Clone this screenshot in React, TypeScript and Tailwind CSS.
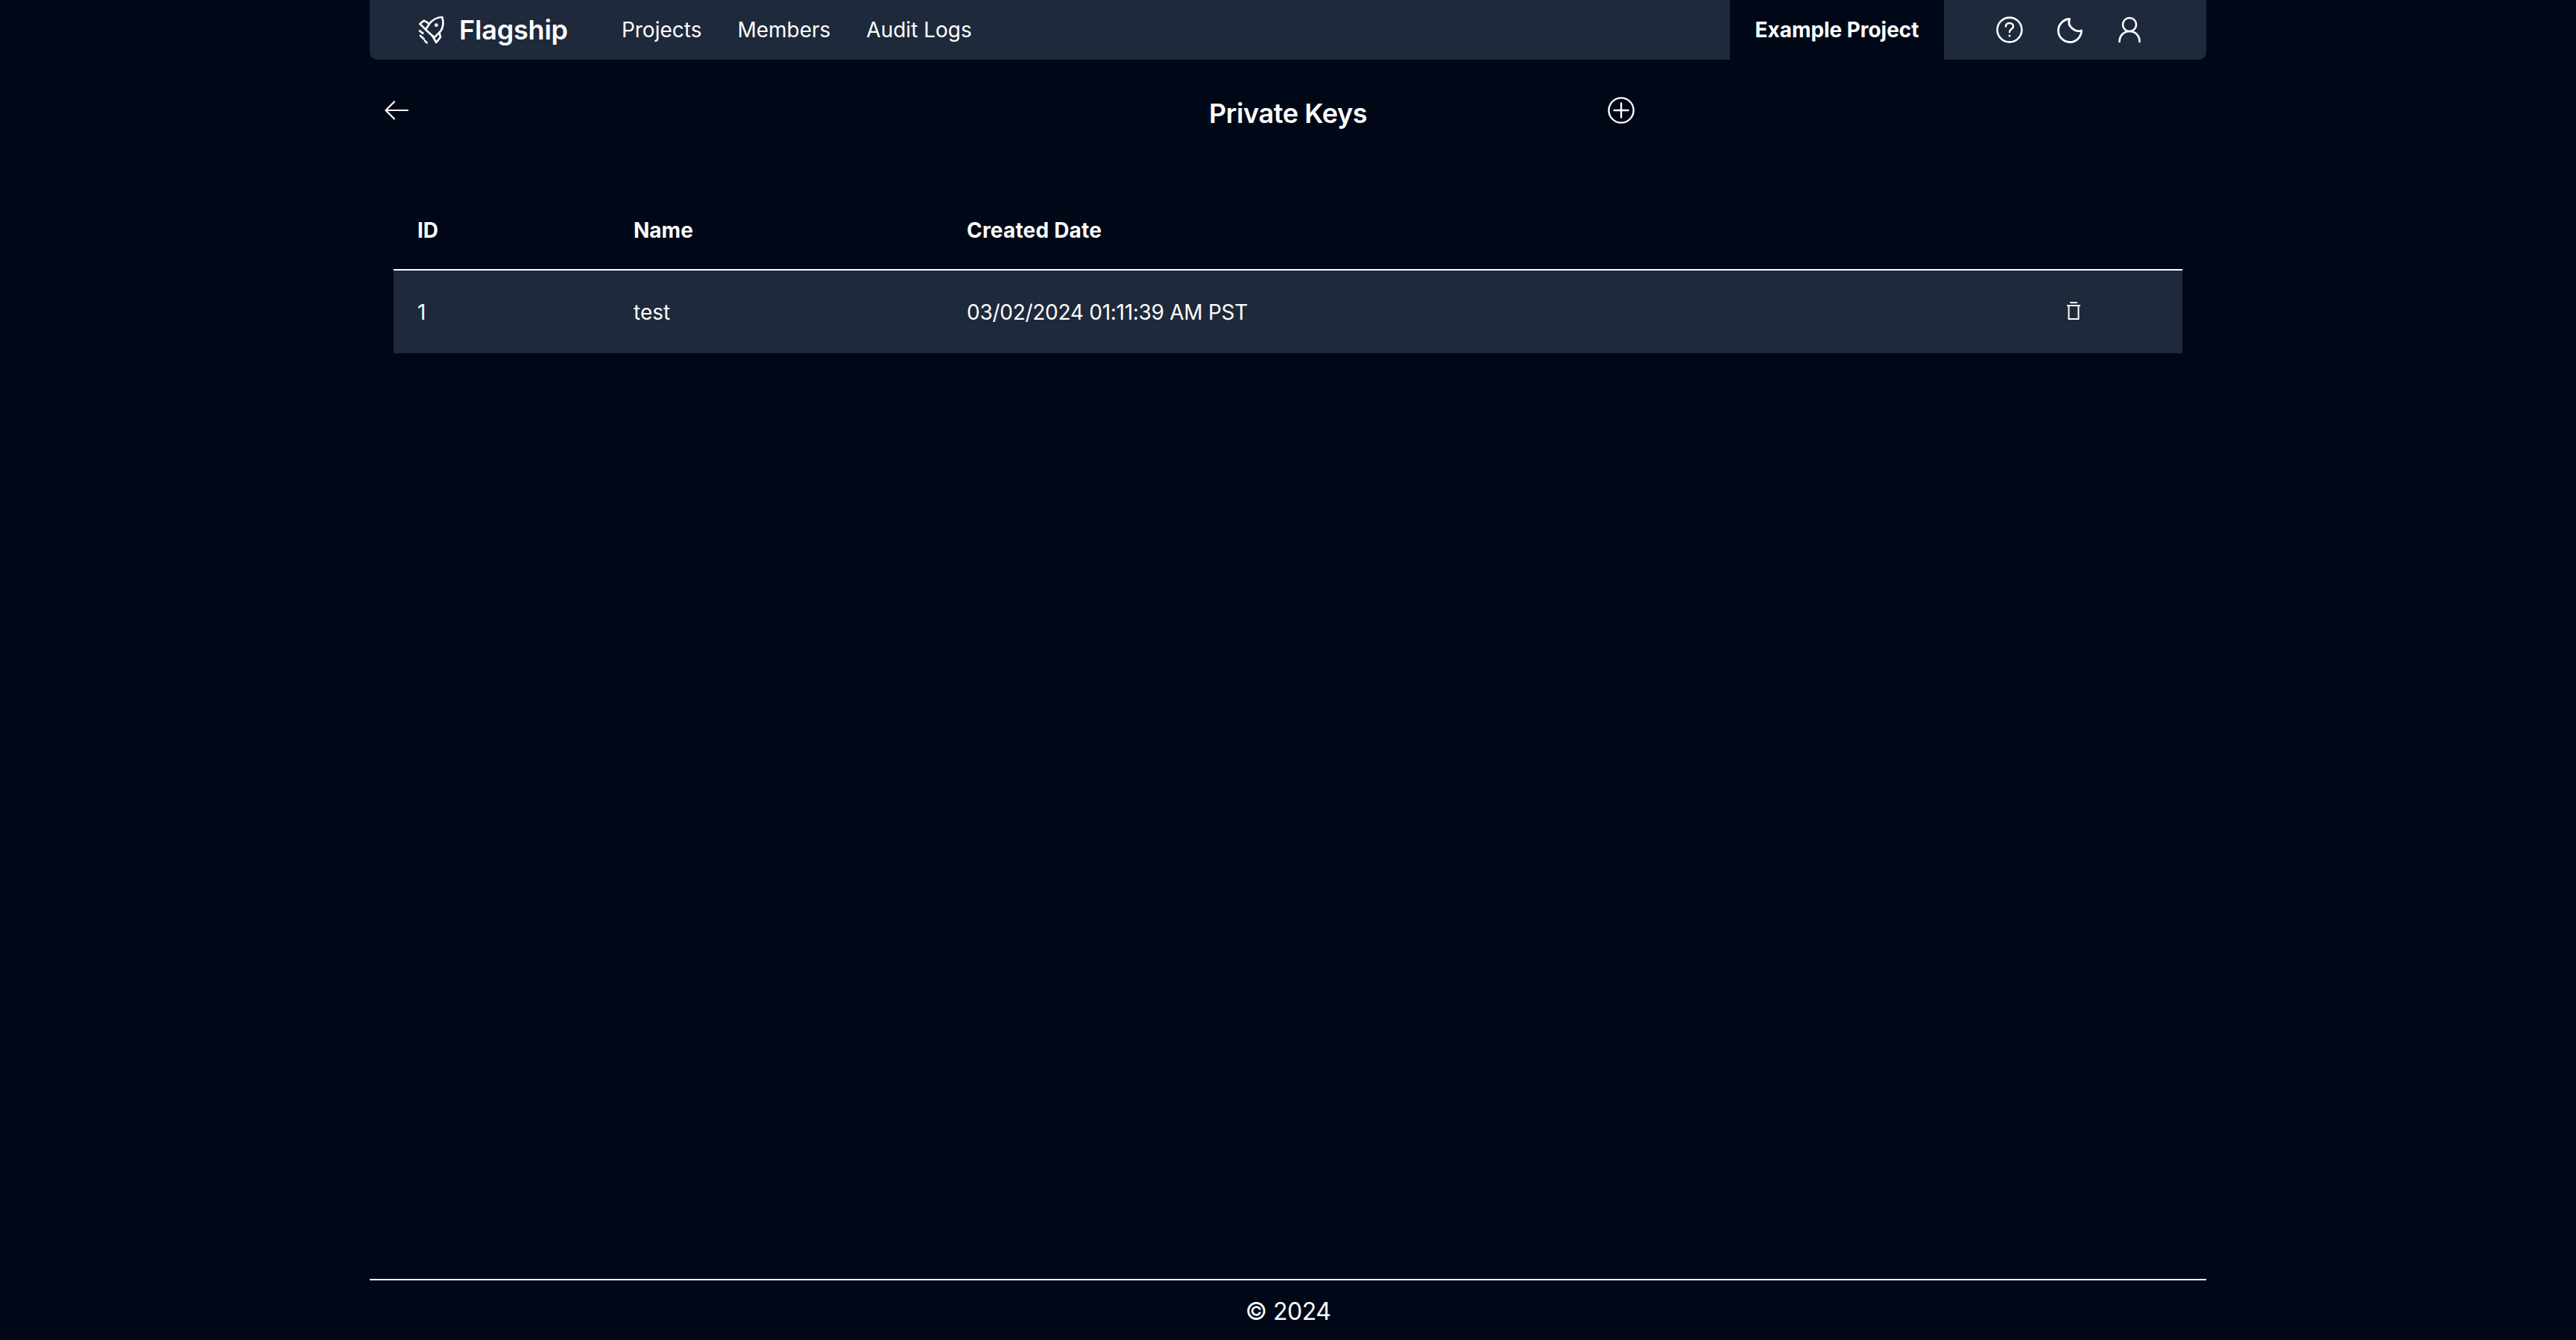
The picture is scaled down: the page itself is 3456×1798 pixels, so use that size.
import React from "react";

function Rocket() {
  return (
    <svg width="48" height="44" viewBox="0 0 144 132" fill="none" stroke="#fff" strokeWidth="8" strokeLinecap="round" strokeLinejoin="round">
      <path d="M112 15C90 15 70 28 58 45L45 65L80 97L105 72C118 55 116 30 112 15Z" />
      <path d="M58 40L38 29L22 42L45 65" />
      <path d="M100 78L105 95L88 117L72 90" />
      <circle cx="88" cy="47" r="7" fill="#fff" stroke="none" />
      <path d="M21 70L34 80M24 90L38 103M42 110L50 118" />
    </svg>
  );
}

function Back() {
  return (
    <svg width="32" height="26" viewBox="0 0 32 26" fill="none" stroke="#fff" strokeWidth="2.2" strokeLinecap="round" strokeLinejoin="round">
      <path d="M31 13H2M13 1.5L1.5 13L13 24.5" />
    </svg>
  );
}

function Plus() {
  return (
    <svg width="36" height="36" viewBox="0 0 36 36" fill="none" stroke="#fff" strokeWidth="2.4" strokeLinecap="round">
      <circle cx="18" cy="18" r="16.6" />
      <path d="M18 8.5V27.5M8.5 18H27.5" />
    </svg>
  );
}

function Help() {
  return (
    <svg width="36" height="36" viewBox="0 0 36 36" fill="none" stroke="#fff" strokeWidth="2.6" strokeLinecap="round" strokeLinejoin="round">
      <circle cx="18" cy="18" r="16.4" />
      <path d="M13 13.5C13 10.5 15.4 9 18 9C20.8 9 23 10.8 23 13.4C23 17 18 17 18 21" />
      <circle cx="18" cy="26" r="1.5" fill="#fff" stroke="none" />
    </svg>
  );
}

function Moon() {
  return (
    <svg width="36" height="36" viewBox="0 0 36 36" fill="none" stroke="#fff" strokeWidth="2.8" strokeLinecap="round" strokeLinejoin="round">
      <path d="M17.7 3.5A15.5 15.5 0 1 0 33.5 19C27 22 13 14 17.7 3.5Z" />
    </svg>
  );
}

function User() {
  return (
    <svg width="30" height="36" viewBox="0 0 30 36" fill="none" stroke="#fff" strokeWidth="2.6" strokeLinecap="round" strokeLinejoin="round">
      <circle cx="15" cy="11" r="9" />
      <path d="M1.5 34C1.5 26 7 20 15 20C23 20 28.5 26 28.5 34" />
    </svg>
  );
}

function Trash() {
  return (
    <svg width="18" height="24" viewBox="0 0 18 24" fill="none" stroke="#fff" strokeWidth="2">
      <path d="M4 1H14M0 5H18M2.5 5V23H15.5V5" />
    </svg>
  );
}

export default function App() {
  return (
    <div className="min-h-screen h-[1798px] bg-[#000818] text-white flex flex-col font-['Inter',sans-serif] overflow-hidden">
      <div className="w-[2464px] mx-auto flex flex-col flex-1">
        <header className="h-[80px] shrink-0 flex items-stretch bg-[#1e293b] rounded-b-[10px] text-[28px]">
          <div className="flex items-center flex-1 pl-[60px]">
            <Rocket />
            <span className="ml-[12px] text-[36px] font-semibold tracking-[-0.2px]">Flagship</span>
            <nav className="flex items-center gap-[48px] ml-[72px]">
              <a>Projects</a>
              <a>Members</a>
              <a>Audit Logs</a>
            </nav>
          </div>
          <div className="w-[287px] bg-[#000818] flex items-center justify-center font-bold tracking-[-0.05px]">Example Project</div>
          <div className="w-[352px] flex items-center pl-[70px]">
            <Help />
            <span className="ml-[45px]"><Moon /></span>
            <span className="ml-[47px]"><User /></span>
          </div>
        </header>

        <main className="flex-1 flex flex-col">
          <div className="grid grid-cols-[1fr_auto_1fr] items-start pt-[50px] mb-[93px]">
            <div className="pl-[20px] pt-[5px]"><Back /></div>
            <h1 className="text-[36px] font-semibold leading-[44px] tracking-[-0.4px]">Private Keys</h1>
            <div className="pl-[323px]"><Plus /></div>
          </div>
          <div className="px-[32px]">
            <table className="w-full table-fixed border-collapse text-[28px]">
              <colgroup>
                <col className="w-[290px]" />
                <col className="w-[447px]" />
                <col />
                <col className="w-[300px]" />
              </colgroup>
              <thead>
                <tr className="border-b-2 border-white h-[95px]">
                  <th className="text-left font-bold px-[32px] pb-[11px]">ID</th>
                  <th className="text-left font-bold px-[32px] pb-[11px]">Name</th>
                  <th className="text-left font-bold px-[32px] pb-[11px] tracking-[0.2px]">Created Date</th>
                  <th />
                </tr>
              </thead>
              <tbody>
                <tr className="bg-[#1e293b] h-[112px]">
                  <td className="px-[32px]">1</td>
                  <td className="px-[32px]">test</td>
                  <td className="px-[32px] tracking-[-0.27px]">03/02/2024 01:11:39 AM PST</td>
                  <td className="pl-[145px] pb-[4px]"><Trash /></td>
                </tr>
              </tbody>
            </table>
          </div>
        </main>

        <footer className="h-[82px] shrink-0 border-t-2 border-white flex items-center justify-center text-[32px] tracking-[-0.5px] pt-[3px]">
          © 2024
        </footer>
      </div>
    </div>
  );
}
